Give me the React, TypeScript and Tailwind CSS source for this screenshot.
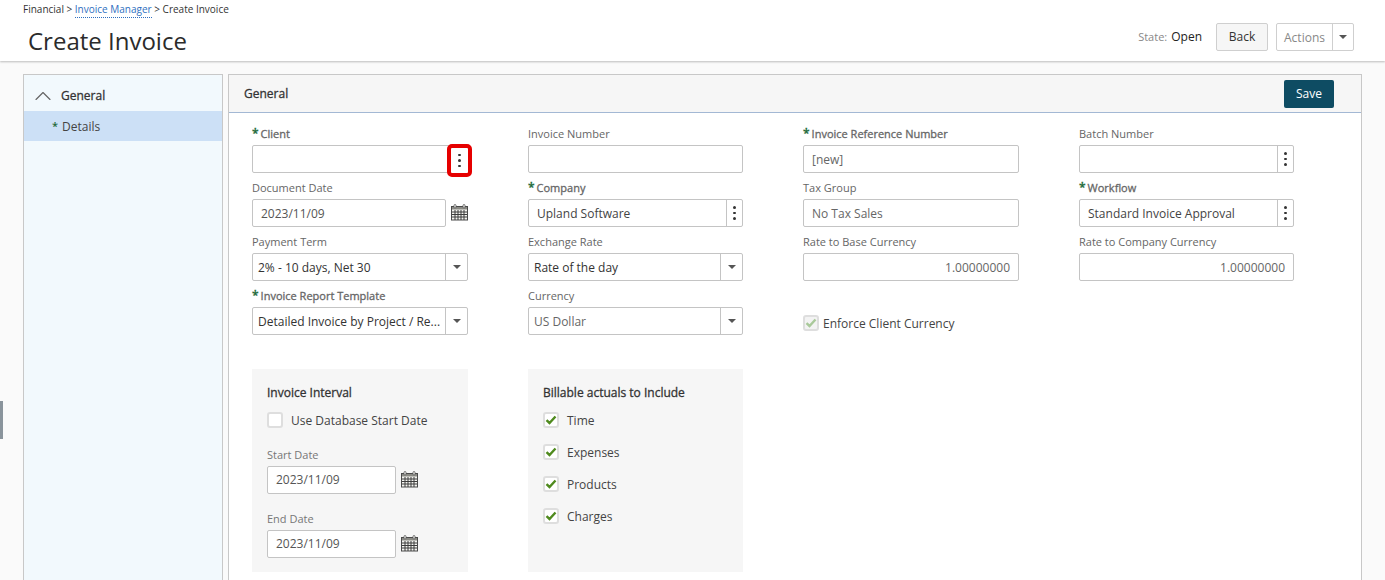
import { ChevronUp } from "lucide-react";

const CalendarIcon = () => (
  <svg width="17" height="17" viewBox="0 0 17 17" className="shrink-0 -mt-[2px]">
    <rect x="0.5" y="2.5" width="16" height="13.5" fill="#f4f4f0" stroke="#4a4a4a" />
    <rect x="1" y="3" width="15" height="2.5" fill="#8a8a84" />
    <path d="M1 8h15M1 10.5h15M1 13h15M4 6v10M7 6v10M10 6v10M13 6v10" stroke="#3c3c3c" strokeWidth="1" fill="none" />
    <rect x="3" y="0.5" width="2" height="3.5" rx="1" fill="#f4f4f0" stroke="#555" strokeWidth="0.8" />
    <rect x="12" y="0.5" width="2" height="3.5" rx="1" fill="#f4f4f0" stroke="#555" strokeWidth="0.8" />
  </svg>
);

const Dots = () => (
  <span className="flex flex-col items-center gap-[3px]">
    <span className="w-[2.5px] h-[2.5px] rounded-full bg-[#333]" />
    <span className="w-[2.5px] h-[2.5px] rounded-full bg-[#333]" />
    <span className="w-[2.5px] h-[2.5px] rounded-full bg-[#333]" />
  </span>
);

const Caret = () => (
  <span className="w-0 h-0 border-l-[4.5px] border-r-[4.5px] border-t-[4px] border-l-transparent border-r-transparent border-t-[#555]" />
);

const Check = ({ faded }: { faded?: boolean }) => (
  <svg width="12" height="10" viewBox="0 0 12 10">
    <path d="M1.5 5.2 4.5 8 10.5 1.5" fill="none" stroke={faded ? "#a9c99a" : "#4f8a1e"} strokeWidth="2.4" />
  </svg>
);

const CheckBox = ({ checked, faded, label }: { checked?: boolean; faded?: boolean; label: string }) => (
  <div className="flex items-center h-4">
    <span className={`w-4 h-4 rounded-[3px] border-2 border-[#dedede] flex items-center justify-center ${faded ? "bg-[#f3f3f3]" : "bg-white"}`}>
      {checked && <Check faded={faded} />}
    </span>
    <span className={`pt-[2px] text-[12px] text-[#444] ${faded ? "ml-[4px]" : "ml-[8px]"}`}>{label}</span>
  </div>
);

const Field = ({ label, required, bold, children }: { label: string; required?: boolean; bold?: boolean; children?: React.ReactNode }) => (
  <div className="h-[54px] flex flex-col justify-end">
    <div className={`h-[19px] text-[11px] leading-[15px] text-[#666] ${bold ? "font-medium [-webkit-text-stroke:0.3px]" : ""}`}>
      {required && <span className="text-[#1f6b3a] text-[12px] leading-[11px] font-semibold mr-[2px]">*</span>}
      {label}
    </div>
    {children}
  </div>
);

const Box = ({ value, right, dim }: { value?: string; right?: boolean; dim?: boolean }) => (
  <div className={`h-[28px] rounded-[2px] border border-[#c4c4c4] bg-white flex items-center px-2 pt-[2px] text-[12px] ${right ? "justify-end text-[#666]" : dim ? "text-[#666]" : "text-[#444]"}`}>
    {value}
  </div>
);

const Lookup = ({ value, hideDots }: { value?: string; hideDots?: boolean }) => (
  <div className="h-[28px] rounded-[2px] border border-[#c4c4c4] bg-white flex items-center text-[12px] text-[#444]">
    <span className="flex-1 px-2 pt-[2px]">{value}</span>
    {!hideDots && (
      <span className="w-[16px] h-full border-l border-[#c4c4c4] flex items-center justify-center">
        <Dots />
      </span>
    )}
  </div>
);

const Select = ({ value, muted }: { value: string; muted?: boolean }) => (
  <div className={`h-[28px] rounded-[2px] border border-[#c4c4c4] bg-white flex items-center text-[12px] ${muted ? "text-[#666]" : "text-[#333]"}`}>
    <span className="flex-1 pl-[5px] pt-[2px] whitespace-nowrap">{value}</span>
    <span className="w-[22px] h-full border-l border-[#c4c4c4] flex items-center justify-center shrink-0">
      <Caret />
    </span>
  </div>
);

const DateBox = ({ wide }: { wide?: boolean }) => (
  <div className="flex items-center gap-[5px]">
    <div className={`h-[28px] rounded-[2px] border border-[#c4c4c4] bg-white flex items-center px-2 text-[12px] text-[#555] ${wide ? "w-[194px] pt-[1px]" : "w-[129px]"}`}>
      2023/11/09
    </div>
    <CalendarIcon />
  </div>
);

export default function App() {
  return (
    <div className="relative h-[580px] overflow-hidden bg-[#fafafa] font-['Open_Sans',sans-serif]">
      {/* left edge handle */}
      <div className="absolute left-0 top-[401px] w-[3px] h-[38px] bg-[#8a949c]" />

      <header className="h-[61px] bg-white shadow-[0_1px_2px_rgba(0,0,0,0.25)] flex justify-between pl-[23px] pr-[31px]">
        <div>
          <div className="pt-[2px] text-[10px] leading-[15px] text-[#333]">
            Financial &gt; <span className="text-[#2f6fc0] border-b border-dotted border-[#2f6fc0] pb-[1px]">Invoice Manager</span> &gt; Create Invoice
          </div>
          <h1 className="ml-[5px] mt-[6px] text-[24px] leading-[36px] text-[#2b2b2b]">Create Invoice</h1>
        </div>
        <div className="flex items-start pt-[23px]">
          <span className="h-[28px] flex items-center text-[11px] text-[#888] mr-[14px]">
            State:<span className="ml-1 text-[12px] text-[#222]">Open</span>
          </span>
          <button className="w-[52px] h-[28px] rounded-[2px] border border-[#cfcfcf] bg-[#f6f6f6] text-[12px] text-[#333]">Back</button>
          <div className="ml-2 h-[28px] flex rounded-[2px] border border-[#cfcfcf] bg-white">
            <span className="w-[55px] pt-[2px] flex items-center justify-center text-[12px] text-[#888]">Actions</span>
            <span className="w-[21px] border-l border-[#cfcfcf] flex items-center justify-center">
              <Caret />
            </span>
          </div>
        </div>
      </header>

      <div className="flex gap-[5px] pl-[23px] pr-[23px] pt-[13px]">
        <aside className="w-[200px] h-[520px] shrink-0 border border-[#c8c8c8] bg-[#f2f9fd]">
          <div className="h-[36px] flex items-center pl-[5px] pt-[6px]">
            <ChevronUp size={28} strokeWidth={1} className="text-[#666]" />
            <span className="ml-[4px] text-[12px] font-medium [-webkit-text-stroke:0.3px] text-[#333]">General</span>
          </div>
          <div className="h-[30px] bg-[#cce0f6] flex items-center pl-[28px] pt-[1px] text-[12px] text-[#444]">
            <span className="text-[#1f6b3a] font-semibold mr-[4px] text-[11px]">*</span>Details
          </div>
        </aside>

        <main className="flex-1 h-[520px] border border-[#c8c8c8] bg-white">
          <div className="h-[38px] bg-[#f6f6f6] border-b border-[#a3b8d4] flex items-start justify-between pl-[15px] pr-[27px]">
            <span className="mt-[10px] text-[12px] leading-[17px] font-medium [-webkit-text-stroke:0.3px] text-[#333]">General</span>
            <button className="mt-[5px] w-[50px] h-[28px] rounded-[2px] bg-[#0e4c63] text-white text-[12px]">Save</button>
          </div>

          <div className="pl-[23px]">
            <div className="grid grid-cols-[216px_215px_216px_215px] gap-x-[60px] pt-[6px]">
              <Field label="Client" required bold>
                <div className="relative">
                  <Lookup hideDots />
                  {/* red highlight drawn over the lookup button */}
                  <div className="absolute left-[195px] top-[-1px] w-[25px] h-[33px] rounded-[5px] border-4 border-[#e60000] flex items-center justify-center bg-white">
                    <Dots />
                  </div>
                </div>
              </Field>
              <Field label="Invoice Number"><Box /></Field>
              <Field label="Invoice Reference Number" required bold><Box value="[new]" dim /></Field>
              <Field label="Batch Number"><Lookup /></Field>

              <Field label="Document Date"><DateBox wide /></Field>
              <Field label="Company" required bold><Lookup value="Upland Software" /></Field>
              <Field label="Tax Group"><Box value="No Tax Sales" dim /></Field>
              <Field label="Workflow" required bold><Lookup value="Standard Invoice Approval" /></Field>

              <Field label="Payment Term"><Select value="2% - 10 days, Net 30" /></Field>
              <Field label="Exchange Rate"><Select value="Rate of the day" /></Field>
              <Field label="Rate to Base Currency"><Box value="1.00000000" right /></Field>
              <Field label="Rate to Company Currency"><Box value="1.00000000" right /></Field>

              <Field label="Invoice Report Template" required bold><Select value="Detailed Invoice by Project / Re..." /></Field>
              <Field label="Currency"><Select value="US Dollar" muted /></Field>
              <div className="pt-[34px]"><CheckBox checked faded label="Enforce Client Currency" /></div>
              <div />
            </div>

            <div className="flex gap-[60px] mt-[34px]">
              <section className="w-[216px] h-[203px] bg-[#f6f6f6] px-[15px] pt-[15px]">
                <h3 className="text-[12px] leading-[18px] font-medium [-webkit-text-stroke:0.3px] text-[#333]">Invoice Interval</h3>
                <div className="mt-[10px]"><CheckBox label="Use Database Start Date" /></div>
                <div className="mt-[19px] text-[11px] leading-[15px] text-[#777]">Start Date</div>
                <div className="mt-[4px]"><DateBox /></div>
                <div className="mt-[17px] text-[11px] leading-[15px] text-[#777]">End Date</div>
                <div className="mt-[4px]"><DateBox /></div>
              </section>
              <section className="w-[215px] h-[203px] bg-[#f6f6f6] px-[15px] pt-[15px]">
                <h3 className="text-[12px] leading-[18px] font-medium [-webkit-text-stroke:0.3px] text-[#333]">Billable actuals to Include</h3>
                <div className="mt-[10px] flex flex-col gap-4">
                  <CheckBox checked label="Time" />
                  <CheckBox checked label="Expenses" />
                  <CheckBox checked label="Products" />
                  <CheckBox checked label="Charges" />
                </div>
              </section>
            </div>
          </div>
        </main>
      </div>
    </div>
  );
}
